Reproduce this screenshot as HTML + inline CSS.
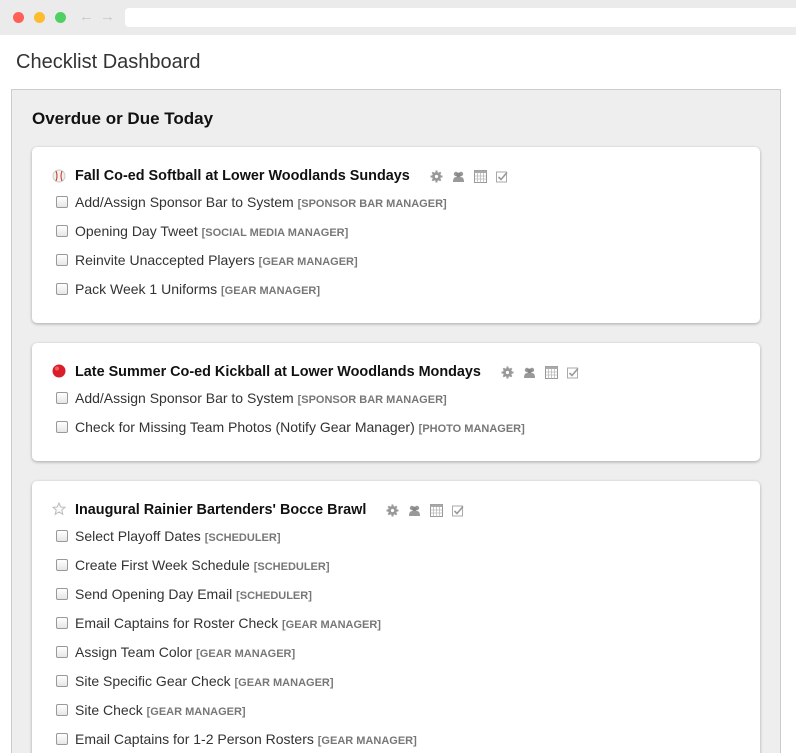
<!DOCTYPE html>
<html><head><meta charset="utf-8"><style>
*{box-sizing:border-box;margin:0;padding:0}
html,body{width:796px;height:753px;overflow:hidden}
body{background:#fff;font-family:"Liberation Sans",Arial,sans-serif;position:relative}
.top{position:absolute;left:0;top:0;width:796px;height:35px;background:#ebebeb}
.dot{position:absolute;top:12px;width:11px;height:11px;border-radius:50%}
.addr{position:absolute;left:125px;top:8px;width:671px;height:19px;background:#fff;border-radius:4px 0 0 4px}
.arr{position:absolute;top:8px;color:#c8c8c8;font-size:15px;font-weight:bold}
h1{position:absolute;left:16px;top:51px;font-size:20px;font-weight:normal;color:#333}
.panel{position:absolute;left:11px;top:89px;width:770px;height:700px;background:#eee;border:1px solid #ccc}
h2{position:absolute;left:32px;top:109px;font-size:17px;font-weight:bold;color:#111}
.card{position:absolute;left:32px;width:728px;background:#fff;border-radius:5px;box-shadow:0 1px 3px rgba(0,0,0,.3)}
.ct{position:absolute;left:43px;font-size:14.4px;font-weight:bold;color:#111;white-space:nowrap}
.ic{position:absolute;left:20px;width:14px;height:14px}
.icons{display:inline-block;margin-left:20px;vertical-align:0;color:#999}
.icons svg{display:inline-block;margin-right:9px;width:13px;height:13px;vertical-align:middle}
.row{position:absolute;left:24px;font-size:14px;color:#333;white-space:nowrap}
.cb{display:inline-block;width:12px;height:12px;border:1px solid #999;border-radius:2px;background:linear-gradient(#fff,#e6e6e6);vertical-align:-1px;margin-right:7px}
.tag{font-size:11px;font-weight:bold;color:#777}
</style></head><body>
<div class="top">
<div class="dot" style="left:13px;background:#fe5f57"></div>
<div class="dot" style="left:34px;background:#fdbc2e"></div>
<div class="dot" style="left:55px;background:#28c940;opacity:.8"></div>
<div class="arr" style="left:79px">&#8592;</div><div class="arr" style="left:100px">&#8594;</div>
<div class="addr"></div>
</div>
<h1>Checklist Dashboard</h1>
<div class="panel"></div>
<h2>Overdue or Due Today</h2>

<svg width="0" height="0" style="position:absolute"><defs>
<g id="gear"><circle cx="6.5" cy="6.5" r="4.5" fill="#999"/><path d="M6.5 0.5v12M0.5 6.5h12M2.3 2.3l8.4 8.4M10.7 2.3l-8.4 8.4" stroke="#999" stroke-width="2"/><circle cx="6.5" cy="6.5" r="1.6" fill="#fff"/></g>
<g id="ppl"><circle cx="4" cy="4" r="2.2" fill="#999"/><circle cx="9" cy="4" r="2.2" fill="#999"/><circle cx="6.5" cy="5" r="2.4" fill="#888"/><path d="M1 12q0-5 3-5h5q3 0 3 5z" fill="#999"/></g>
<g id="cal"><rect x="0.5" y="0.5" width="12" height="12" fill="#fff" stroke="#999"/><rect x="0.5" y="0.5" width="12" height="2.5" fill="#aaa"/><path d="M3.5 3v9.5M6.5 3v9.5M9.5 3v9.5M1 6h11M1 9h11" stroke="#bbb" stroke-width=".8"/></g>
<g id="chk"><rect x="0.5" y="2" width="10" height="10" fill="#fff" stroke="#aaa"/><path d="M2.5 7l2.5 2.5 6-7" stroke="#999" stroke-width="1.6" fill="none"/></g>
</defs></svg>

<div class="card" style="top:147px;height:176px">
<svg class="ic" style="top:22px" viewBox="0 0 14 14"><circle cx="7" cy="7" r="6" fill="#f4f0ec" stroke="#ccc"/><path d="M4 2q2 5 0 10M10 2q-2 5 0 10" stroke="#b33" fill="none"/></svg>
<div class="ct" style="top:21px">Fall Co-ed Softball at Lower Woodlands Sundays<span class="icons"><svg viewBox="0 0 13 13"><use href="#gear"/></svg><svg viewBox="0 0 13 13"><use href="#ppl"/></svg><svg viewBox="0 0 13 13"><use href="#cal"/></svg><svg viewBox="0 0 13 13"><use href="#chk"/></svg></span></div>
<div class="row" style="top:47px"><span class="cb"></span>Add/Assign Sponsor Bar to System <span class="tag">[SPONSOR BAR MANAGER]</span></div>
<div class="row" style="top:76px"><span class="cb"></span>Opening Day Tweet <span class="tag">[SOCIAL MEDIA MANAGER]</span></div>
<div class="row" style="top:105px"><span class="cb"></span>Reinvite Unaccepted Players <span class="tag">[GEAR MANAGER]</span></div>
<div class="row" style="top:134px"><span class="cb"></span>Pack Week 1 Uniforms <span class="tag">[GEAR MANAGER]</span></div>
</div>

<div class="card" style="top:343px;height:118px">
<svg class="ic" style="top:21px" viewBox="0 0 14 14"><circle cx="7" cy="7" r="6.5" fill="#d9202a"/><circle cx="5" cy="4.5" r="2" fill="#f06060"/></svg>
<div class="ct" style="top:21px">Late Summer Co-ed Kickball at Lower Woodlands Mondays<span class="icons"><svg viewBox="0 0 13 13"><use href="#gear"/></svg><svg viewBox="0 0 13 13"><use href="#ppl"/></svg><svg viewBox="0 0 13 13"><use href="#cal"/></svg><svg viewBox="0 0 13 13"><use href="#chk"/></svg></span></div>
<div class="row" style="top:47px"><span class="cb"></span>Add/Assign Sponsor Bar to System <span class="tag">[SPONSOR BAR MANAGER]</span></div>
<div class="row" style="top:76px"><span class="cb"></span>Check for Missing Team Photos (Notify Gear Manager) <span class="tag">[PHOTO MANAGER]</span></div>
</div>

<div class="card" style="top:481px;height:300px">
<svg class="ic" style="top:21px" viewBox="0 0 14 14"><path d="M7 1l1.8 4 4.2.3-3.2 2.8 1 4.2L7 10 3.2 12.3l1-4.2L1 5.3 5.2 5z" fill="#fafafa" stroke="#bbb"/></svg>
<div class="ct" style="top:21px">Inaugural Rainier Bartenders' Bocce Brawl<span class="icons"><svg viewBox="0 0 13 13"><use href="#gear"/></svg><svg viewBox="0 0 13 13"><use href="#ppl"/></svg><svg viewBox="0 0 13 13"><use href="#cal"/></svg><svg viewBox="0 0 13 13"><use href="#chk"/></svg></span></div>
<div class="row" style="top:47px"><span class="cb"></span>Select Playoff Dates <span class="tag">[SCHEDULER]</span></div>
<div class="row" style="top:76px"><span class="cb"></span>Create First Week Schedule <span class="tag">[SCHEDULER]</span></div>
<div class="row" style="top:105px"><span class="cb"></span>Send Opening Day Email <span class="tag">[SCHEDULER]</span></div>
<div class="row" style="top:134px"><span class="cb"></span>Email Captains for Roster Check <span class="tag">[GEAR MANAGER]</span></div>
<div class="row" style="top:163px"><span class="cb"></span>Assign Team Color <span class="tag">[GEAR MANAGER]</span></div>
<div class="row" style="top:192px"><span class="cb"></span>Site Specific Gear Check <span class="tag">[GEAR MANAGER]</span></div>
<div class="row" style="top:221px"><span class="cb"></span>Site Check <span class="tag">[GEAR MANAGER]</span></div>
<div class="row" style="top:250px"><span class="cb"></span>Email Captains for 1-2 Person Rosters <span class="tag">[GEAR MANAGER]</span></div>
</div>
</body></html>
